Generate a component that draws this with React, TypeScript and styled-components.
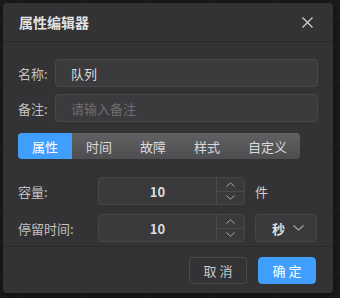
import styled, { createGlobalStyle } from "styled-components";

const GlobalStyle = createGlobalStyle`
    html, body {
        margin:0;
        padding:0;
    }
    body {
        width:340px;
        height:298px;
        overflow:hidden;
        background-color:#1b1b1c;
        background-image:
            linear-gradient(to right, #262628 1px, transparent 1px),
            linear-gradient(to bottom, #262628 1px, transparent 1px);
        background-size:64px 64px;
        background-position:22px 17px;
        font-family:"Noto Sans CJK SC", "Noto Sans", sans-serif;
    }
    #root{
        padding:3px 0 0 3px;
    }
`;

const Dialog = styled.div`
    width:330px;
    height:290px;
    box-sizing:border-box;
    background:#333335;
    border-radius:4px;
    box-shadow:0 2px 10px rgba(0,0,0,.45);
    display:flex;
    flex-direction:column;
`;

const Header = styled.div`
    height:39px;
    box-sizing:border-box;
    display:flex;
    align-items:center;
    padding:0 20px 0 16px;
    border-bottom:1px solid #2a2a2c;

    .title{
        font-size:14px;
        font-weight:700;
        color:#e2e2e2;
    }
    .close{
        margin-left:auto;
        display:flex;
        color:#cfcfcf;
    }
`;

const Body = styled.div`
    flex:1;
    padding:17px 15px 0 15px;
    display:flex;
    flex-direction:column;
`;

const Row = styled.div<{ $gap?: number; $label?: number }>`
    display:flex;
    align-items:center;
    margin-bottom:${p => p.$gap ?? 0}px;

    .label{
        width:${p => p.$label ?? 37}px;
        flex:none;
        font-size:13px;
        color:#c2c2c2;
    }
`;

const TextInput = styled.input`
    flex:1;
    height:28px;
    box-sizing:border-box;
    background:#3b3b3e;
    border:1px solid #48484b;
    border-radius:4px;
    padding:0 15px;
    font-family:inherit;
    font-size:13px;
    color:#dcdcdc;
    outline:none;

    &::placeholder{
        color:#6e6e72;
    }
`;

const Tabs = styled.div`
    width:282px;
    height:26px;
    margin:4px 0 18px;
    display:flex;
    border-radius:4px;
    overflow:hidden;
    background:linear-gradient(to bottom, #616163, #4e4e50);
`;

const Tab = styled.div<{ $active?: boolean }>`
    flex:1 0 auto;
    padding:0 14px;
    display:flex;
    align-items:center;
    justify-content:center;
    font-size:13px;
    color:${p => p.$active ? "#fff" : "#dadada"};
    background:${p => p.$active ? "#409eff" : "transparent"};
`;

const NumberBox = styled.div`
    width:147px;
    height:28px;
    box-sizing:border-box;
    display:flex;
    background:#3a3a3d;
    border:1px solid #47474a;
    border-radius:4px;

    .value{
        flex:1;
        display:flex;
        align-items:center;
        justify-content:center;
        font-size:13px;
        font-weight:700;
        color:#dedede;
    }
    .spin{
        width:27px;
        display:flex;
        flex-direction:column;
        border-left:1px solid #4a4a4d;
    }
    .spin span{
        flex:1;
        display:flex;
        align-items:center;
        justify-content:center;
        color:#a8a8a8;
    }
    .spin span + span{
        border-top:1px solid #4a4a4d;
    }
`;

const Unit = styled.span`
    margin-left:10px;
    font-size:13px;
    color:#cfcfcf;
`;

const Select = styled.div`
    width:62px;
    height:28px;
    box-sizing:border-box;
    margin-left:10px;
    display:flex;
    align-items:center;
    justify-content:space-between;
    padding:0 12px 0 16px;
    background:#3a3a3d;
    border:1px solid #47474a;
    border-radius:4px;
    font-size:13px;
    font-weight:700;
    color:#dedede;

    svg{
        color:#a8a8a8;
    }
`;

const Footer = styled.div`
    height:47px;
    box-sizing:border-box;
    border-top:1px solid #2a2a2c;
    display:flex;
    justify-content:flex-end;
    align-items:flex-start;
    gap:11px;
    padding:10px 17px 0 0;
`;

const Button = styled.button<{ $primary?: boolean }>`
    width:58px;
    height:27px;
    border-radius:4px;
    font-family:inherit;
    font-size:13px;
    cursor:pointer;
    color:${p => p.$primary ? "#fff" : "#c8c8c8"};
    background:${p => p.$primary ? "#409eff" : "transparent"};
    border:1px solid ${p => p.$primary ? "#409eff" : "#4a4a4d"};
`;

const Chevron = ({ up }: { up?: boolean }) => (
    <svg width="9" height="5" viewBox="0 0 9 5" fill="none" stroke="currentColor" strokeWidth="1">
        {up ? <path d="M0.5 4.5 L4.5 0.8 L8.5 4.5" /> : <path d="M0.5 0.5 L4.5 4.2 L8.5 0.5" />}
    </svg>
);

const tabs = ["属性", "时间", "故障", "样式", "自定义"];

export default function App() {
    return (
        <>
            <GlobalStyle />
            <Dialog>
                <Header>
                    <span className="title">属性编辑器</span>
                    <span className="close">
                        <svg width="11" height="11" viewBox="0 0 11 11" stroke="currentColor" strokeWidth="1.3">
                            <path d="M0.5 0.5 L10.5 10.5 M10.5 0.5 L0.5 10.5" />
                        </svg>
                    </span>
                </Header>
                <Body>
                    <Row $gap={7}>
                        <span className="label">名称:</span>
                        <TextInput defaultValue="队列" />
                    </Row>
                    <Row $gap={7}>
                        <span className="label">备注:</span>
                        <TextInput placeholder="请输入备注" />
                    </Row>
                    <Tabs>
                        {tabs.map((t, i) => (
                            <Tab key={t} $active={i === 0}>{t}</Tab>
                        ))}
                    </Tabs>
                    <Row $gap={9} $label={80}>
                        <span className="label">容量:</span>
                        <NumberBox>
                            <span className="value">10</span>
                            <div className="spin">
                                <span><Chevron up /></span>
                                <span><Chevron /></span>
                            </div>
                        </NumberBox>
                        <Unit>件</Unit>
                    </Row>
                    <Row $label={80}>
                        <span className="label">停留时间:</span>
                        <NumberBox>
                            <span className="value">10</span>
                            <div className="spin">
                                <span><Chevron up /></span>
                                <span><Chevron /></span>
                            </div>
                        </NumberBox>
                        <Select>
                            秒
                            <svg width="11" height="6" viewBox="0 0 11 6" fill="none" stroke="currentColor" strokeWidth="1.1">
                                <path d="M0.5 0.5 L5.5 5 L10.5 0.5" />
                            </svg>
                        </Select>
                    </Row>
                </Body>
                <Footer>
                    <Button>取 消</Button>
                    <Button $primary>确 定</Button>
                </Footer>
            </Dialog>
        </>
    );
}
